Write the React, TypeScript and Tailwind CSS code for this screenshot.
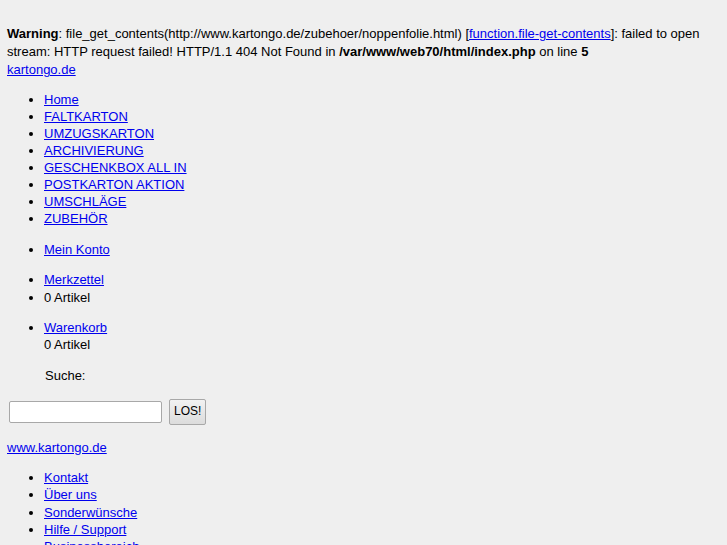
const links1 = [
  "Home",
  "FALTKARTON",
  "UMZUGSKARTON",
  "ARCHIVIERUNG",
  "GESCHENKBOX ALL IN",
  "POSTKARTON AKTION",
  "UMSCHLÄGE",
  "ZUBEHÖR",
]

const links2 = ["Kontakt", "Über uns", "Sonderwünsche", "Hilfe / Support", "Businessbereich"]

const A = ({ children }: { children: React.ReactNode }) => (
  <a href="#" className="text-[#0000ee] underline">
    {children}
  </a>
)

const List = ({ children, className = "" }: { children: React.ReactNode; className?: string }) => (
  <ul className={`list-disc pl-[37px] my-[13.33px] ${className}`}>{children}</ul>
)

export default function App() {
  return (
    <div className="h-[545px] overflow-hidden bg-[#efefef] px-[7px] pt-[25px] text-[13px] leading-[17.14px] text-black font-['Liberation_Sans',Arial,sans-serif]">
      <div className="leading-[18px]">
        <b>Warning</b>: file_get_contents(http://www.kartongo.de/zubehoer/noppenfolie.html) [
        <A>function.file-get-contents</A>]: failed to open stream: HTTP request failed! HTTP/1.1 404 Not Found in{" "}
        <b>/var/www/web70/html/index.php</b> on line <b>5</b>
        <br />
        <A>kartongo.de</A>
      </div>

      <List className="!mt-[11.5px]">
        {links1.map((l) => (
          <li key={l}>
            <A>{l}</A>
          </li>
        ))}
      </List>
      <List>
        <li>
          <A>Mein Konto</A>
        </li>
      </List>
      <List>
        <li>
          <A>Merkzettel</A>
        </li>
        <li>0 Artikel</li>
      </List>
      <List>
        <li>
          <A>Warenkorb</A>
          <div>0 Artikel</div>
        </li>
      </List>
      <div className="pl-[38px]">Suche:</div>
      <div className="flex items-center gap-[7px] mt-[15px] pl-[2px]">
        <input className="w-[153px] h-[22px] bg-white border border-[#a8a8a8] rounded-[2px]" />
        <button className="h-[26px] px-[4px] border border-[#a8a8a8] rounded-[2px] bg-gradient-to-b from-[#f2f2f2] to-[#dcdcdc] text-[12px]">
          LOS!
        </button>
      </div>
      <div className="mt-[14px]">
        <A>www.kartongo.de</A>
      </div>
      <List>
        {links2.map((l) => (
          <li key={l}>
            <A>{l}</A>
          </li>
        ))}
      </List>
    </div>
  )
}
